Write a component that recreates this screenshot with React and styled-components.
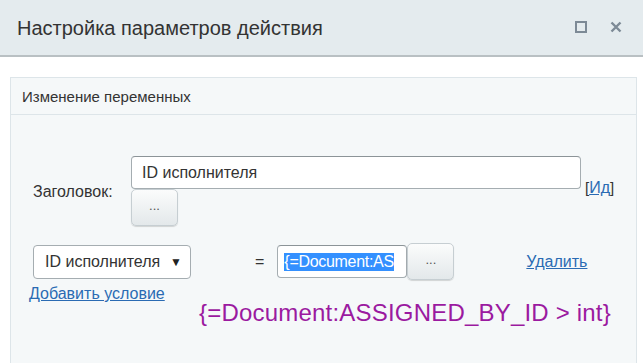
import React from "react";
import styled, { createGlobalStyle } from "styled-components";

const Global = createGlobalStyle`
  html, body {
    margin: 0;
    padding: 0;
    background: #fff;
    font-family: "Liberation Sans", Arial, sans-serif;
    color: #333;
  }
`;

const Dialog = styled.div`
  width: 643px;
  height: 363px;
  overflow: hidden;
  background: #fff;
`;

const TitleBar = styled.div`
  height: 55px;
  background: #e4ebee;
  border-bottom: 2px solid #b9c0c3;
  display: flex;
  align-items: center;
  padding: 0 0 0 17px;
`;

const Title = styled.div`
  flex: 1;
  font-size: 20px;
  color: #333;
  margin-top: 1px;
`;

const TitleIcons = styled.div`
  display: flex;
  align-items: center;
  gap: 23px;
  margin-right: 21px;
  margin-top: -2px;
`;

const Content = styled.div`
  padding: 20px 6px 0 10px;
`;

const Panel = styled.div`
  border: 1px solid #dde5e9;
  background: #f5f8f9;
  height: 300px;
`;

const PanelHead = styled.div`
  height: 36px;
  border-bottom: 1px solid #dde5e9;
  display: flex;
  align-items: center;
  padding-left: 11px;
  font-size: 15px;
  color: #333;
`;

const PanelBody = styled.div`
  padding: 41px 0 0 0;
`;

const FieldRow = styled.div`
  display: flex;
  align-items: center;
`;

const Label = styled.div`
  width: 120px;
  padding-left: 22px;
  padding-top: 2px;
  box-sizing: border-box;
  font-size: 16px;
  color: #333;
`;

const FieldStack = styled.div`
  display: flex;
  flex-direction: column;
`;

const InputLine = styled.div`
  display: flex;
  align-items: flex-end;
`;

const TextInput = styled.div`
  width: ${(p) => p.$w}px;
  height: 33px;
  box-sizing: border-box;
  border: 1px solid #a5adb1;
  border-top-color: #8c9498;
  border-radius: 4px;
  background: #fff;
  display: flex;
  align-items: center;
  padding-left: ${(p) => p.$pad ?? 10}px;
  font-size: 16px;
  color: #333;
  white-space: nowrap;
`;

const Selected = styled.span`
  background: #3390ff;
  color: #fff;
  letter-spacing: -0.3px;
`;

const DotsButton = styled.div`
  width: 47px;
  height: 37px;
  box-sizing: border-box;
  border: 1px solid #c6ced2;
  border-radius: 5px;
  background: linear-gradient(#fbfcfc, #e3e8ea);
  box-shadow: 0 1px 1px rgba(0, 0, 0, 0.15);
  display: flex;
  align-items: center;
  justify-content: center;
  font-size: 13px;
  color: #555;
  padding-bottom: 4px;
`;

const Link = styled.a`
  color: #2a6bb3;
  text-decoration: underline;
  font-size: 16px;
  cursor: pointer;
  margin-left: ${(p) => p.$ml ?? 0}px;
`;

const Bracket = styled.span`
  font-size: 15px;
  color: #333;
  margin-left: 4px;
  margin-bottom: -8px;
`;

const CondRow = styled.div`
  display: flex;
  align-items: center;
  margin-top: 17px;
  padding-left: 22px;
`;

const Select = styled.div`
  width: 158px;
  height: 34px;
  box-sizing: border-box;
  border: 1px solid #a5adb1;
  border-radius: 4px;
  background: #fff;
  display: flex;
  align-items: center;
  justify-content: space-between;
  padding: 0 8px 0 11px;
  font-size: 16px;
  color: #333;
`;

const Arrow = styled.span`
  font-size: 12px;
  color: #222;
`;

const Equals = styled.span`
  font-size: 16px;
  margin: 0 13px 0 64px;
`;

const Hint = styled.div`
  display: flex;
  flex-direction: column;
  padding: 5px 0 0 18px;
`;

const Expr = styled.div`
  margin: -4px 0 0 188px;
  font-size: 24px;
  letter-spacing: 0.2px;
  color: #9b1aa0;
  white-space: nowrap;
`;

export default function App() {
  return (
    <Dialog>
      <Global />
      <TitleBar>
        <Title>Настройка параметров действия</Title>
        <TitleIcons>
          <svg width="12" height="12" viewBox="0 0 12 12">
            <rect x="1" y="1" width="10" height="10" fill="none" stroke="#7d8a96" strokeWidth="2" />
          </svg>
          <svg width="12" height="12" viewBox="0 0 12 12">
            <path d="M1.5 1.5L10.5 10.5M10.5 1.5L1.5 10.5" stroke="#7d8a96" strokeWidth="2.4" />
          </svg>
        </TitleIcons>
      </TitleBar>
      <Content>
        <Panel>
          <PanelHead>Изменение переменных</PanelHead>
          <PanelBody>
            <FieldRow>
              <Label>Заголовок:</Label>
              <FieldStack>
                <InputLine>
                  <TextInput $w={450}>ID исполнителя</TextInput>
                  <Bracket>
                    [<Link>Ид</Link>]
                  </Bracket>
                </InputLine>
                <DotsButton>...</DotsButton>
              </FieldStack>
            </FieldRow>
            <CondRow>
              <Select>
                ID исполнителя <Arrow>▼</Arrow>
              </Select>
              <Equals>=</Equals>
              <TextInput $w={130} $pad={6}>
                <Selected>{"{=Document:AS"}</Selected>
              </TextInput>
              <DotsButton>...</DotsButton>
              <Link $ml={72}>Удалить</Link>
            </CondRow>
            <Hint>
              <Link>Добавить условие</Link>
            </Hint>
            <Expr>{"{=Document:ASSIGNED_BY_ID > int}"}</Expr>
          </PanelBody>
        </Panel>
      </Content>
    </Dialog>
  );
}
